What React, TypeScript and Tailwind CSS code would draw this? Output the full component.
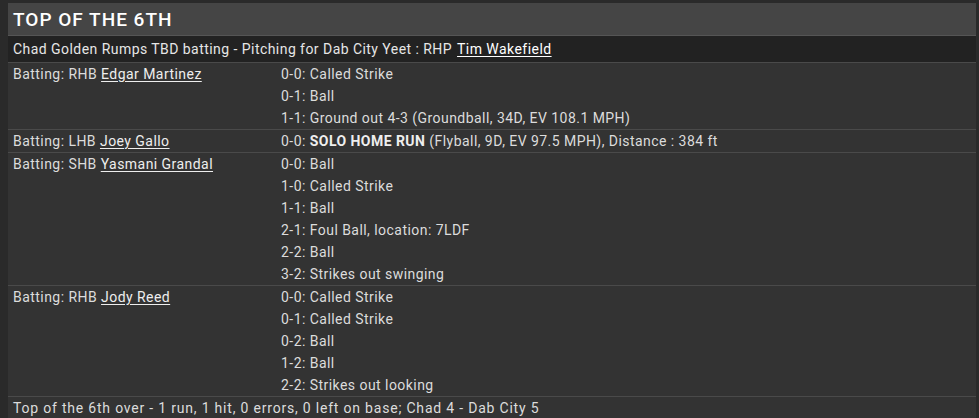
const innings = [
  {
    batter: 'Edgar Martinez',
    hand: 'RHB',
    pitches: [
      { count: '0-0', text: 'Called Strike' },
      { count: '0-1', text: 'Ball' },
      { count: '1-1', text: 'Ground out 4-3 (Groundball, 34D, EV 108.1 MPH)' },
    ],
  },
  {
    batter: 'Joey Gallo',
    hand: 'LHB',
    pitches: [
      {
        count: '0-0',
        bold: 'SOLO HOME RUN',
        text: ' (Flyball, 9D, EV 97.5 MPH), Distance : 384 ft',
      },
    ],
  },
  {
    batter: 'Yasmani Grandal',
    hand: 'SHB',
    pitches: [
      { count: '0-0', text: 'Ball' },
      { count: '1-0', text: 'Called Strike' },
      { count: '1-1', text: 'Ball' },
      { count: '2-1', text: 'Foul Ball, location: 7LDF' },
      { count: '2-2', text: 'Ball' },
      { count: '3-2', text: 'Strikes out swinging' },
    ],
  },
  {
    batter: 'Jody Reed',
    hand: 'RHB',
    pitches: [
      { count: '0-0', text: 'Called Strike' },
      { count: '0-1', text: 'Called Strike' },
      { count: '0-2', text: 'Ball' },
      { count: '1-2', text: 'Ball' },
      { count: '2-2', text: 'Strikes out looking' },
    ],
  },
]

export default function App() {
  return (
    <div
      className="min-h-[418px] bg-[#2a2a2a] pt-[3px] pl-[8px] pr-[3px] text-[14px] tracking-[0.45px] text-[#dcdcdc]"
      style={{ fontFamily: 'Roboto, "Noto Sans", sans-serif' }}
    >
      <div className="bg-[#333333]">
        {/* Inning title */}
        <div className="h-[33px] bg-[#454545] border-b border-[#555555] px-[5px] flex items-center">
          <h2 className="text-[19px] font-medium text-white leading-none tracking-[1px]">
            TOP OF THE 6TH
          </h2>
        </div>

        {/* Pitcher line */}
        <div className="h-[27px] bg-[#222222] border-b border-[#4a4a4a] px-[5px] flex items-center text-[#e6e6e6]">
          Chad Golden Rumps TBD batting - Pitching for Dab City Yeet : RHP{' '}
          <a className="ml-[5px] underline underline-offset-2 text-white">Tim Wakefield</a>
        </div>

        {/* At-bats */}
        {innings.map((ab) => (
          <div key={ab.batter} className="flex border-b border-[#4a4a4a]">
            <div className="w-[268px] pl-[5px] leading-[22px]">
              Batting: {ab.hand}{' '}
              <a className="underline underline-offset-2 text-[#eeeeee]">{ab.batter}</a>
            </div>
            <ul className="pl-[5px]">
              {ab.pitches.map((p, i) => (
                <li key={i} className="leading-[22px]">
                  {p.count}:{' '}
                  {p.bold && <b className="font-bold text-[#eeeeee]">{p.bold}</b>}
                  {p.text}
                </li>
              ))}
            </ul>
          </div>
        ))}

        <div className="px-[5px] leading-[22px] tracking-[0.8px]">
          Top of the 6th over - 1 run, 1 hit, 0 errors, 0 left on base; Chad 4 - Dab City 5
        </div>
      </div>
    </div>
  )
}
